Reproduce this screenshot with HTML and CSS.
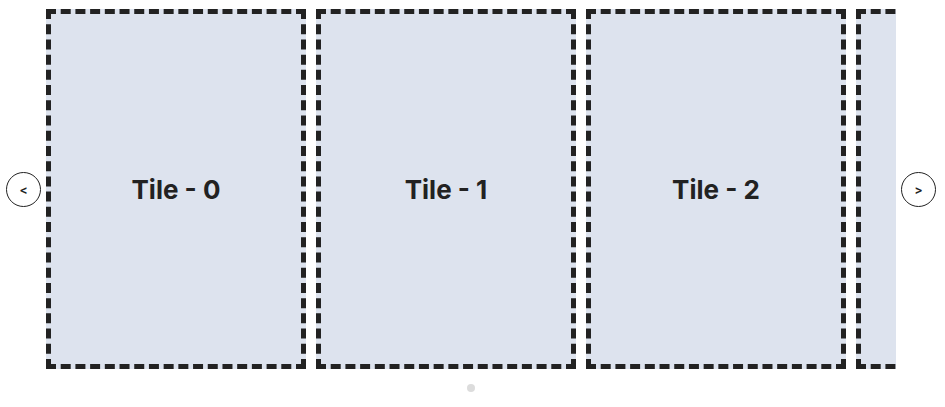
FILE: index.html
```html
<!DOCTYPE html>
<html lang="en">
<head>
    <meta charset="UTF-8">
    <title>Carousel</title>
    <link rel="stylesheet" href="styles.css">
</head>
<body>
    <div class="carousel">
        <div class="row">
            <button class="arrow">&lt;</button>
            <div class="viewport">
                <div class="track">
                    <div class="tile">Tile - 0</div>
                    <div class="tile">Tile - 1</div>
                    <div class="tile">Tile - 2</div>
                    <div class="tile">Tile - 3</div>
                </div>
            </div>
            <button class="arrow">&gt;</button>
        </div>
        <div class="dots">
            <span class="dot"></span>
        </div>
    </div>
</body>
</html>
```

FILE: styles.css
```css
*{
    margin: 0;
    padding: 0;
    box-sizing: border-box;
}
body{
    background: #fff;
    font-family: Inter, 'Noto Sans', sans-serif;
}
.carousel{
    padding-top: 9px;
    width: 945px;
}
.row{
    display: flex;
    align-items: center;
    padding-left: 6px;
    gap: 5px;
}
.arrow{
    width: 35px;
    height: 35px;
    border-radius: 50%;
    border: 1px solid #222;
    background: #fff;
    color: #222;
    font-family: Inter, sans-serif;
    font-size: 12px;
    font-weight: 700;
    display: flex;
    justify-content: center;
    align-items: center;
    flex-shrink: 0;
}
.viewport{
    width: 850px;
    overflow: hidden;
}
.track{
    display: flex;
    gap: 10px;
}
.tile{
    flex: 0 0 260px;
    height: 360px;
    border: 5px dashed #222;
    background: #dde3ee;
    display: flex;
    justify-content: center;
    align-items: center;
    font-size: 26px;
    font-weight: 700;
    color: #222;
}
.dots{
    display: flex;
    justify-content: center;
    width: 850px;
    margin-left: 46px;
    margin-top: 15px;
}
.dot{
    width: 8px;
    height: 8px;
    border-radius: 50%;
    background: #dcdcdc;
}
```
